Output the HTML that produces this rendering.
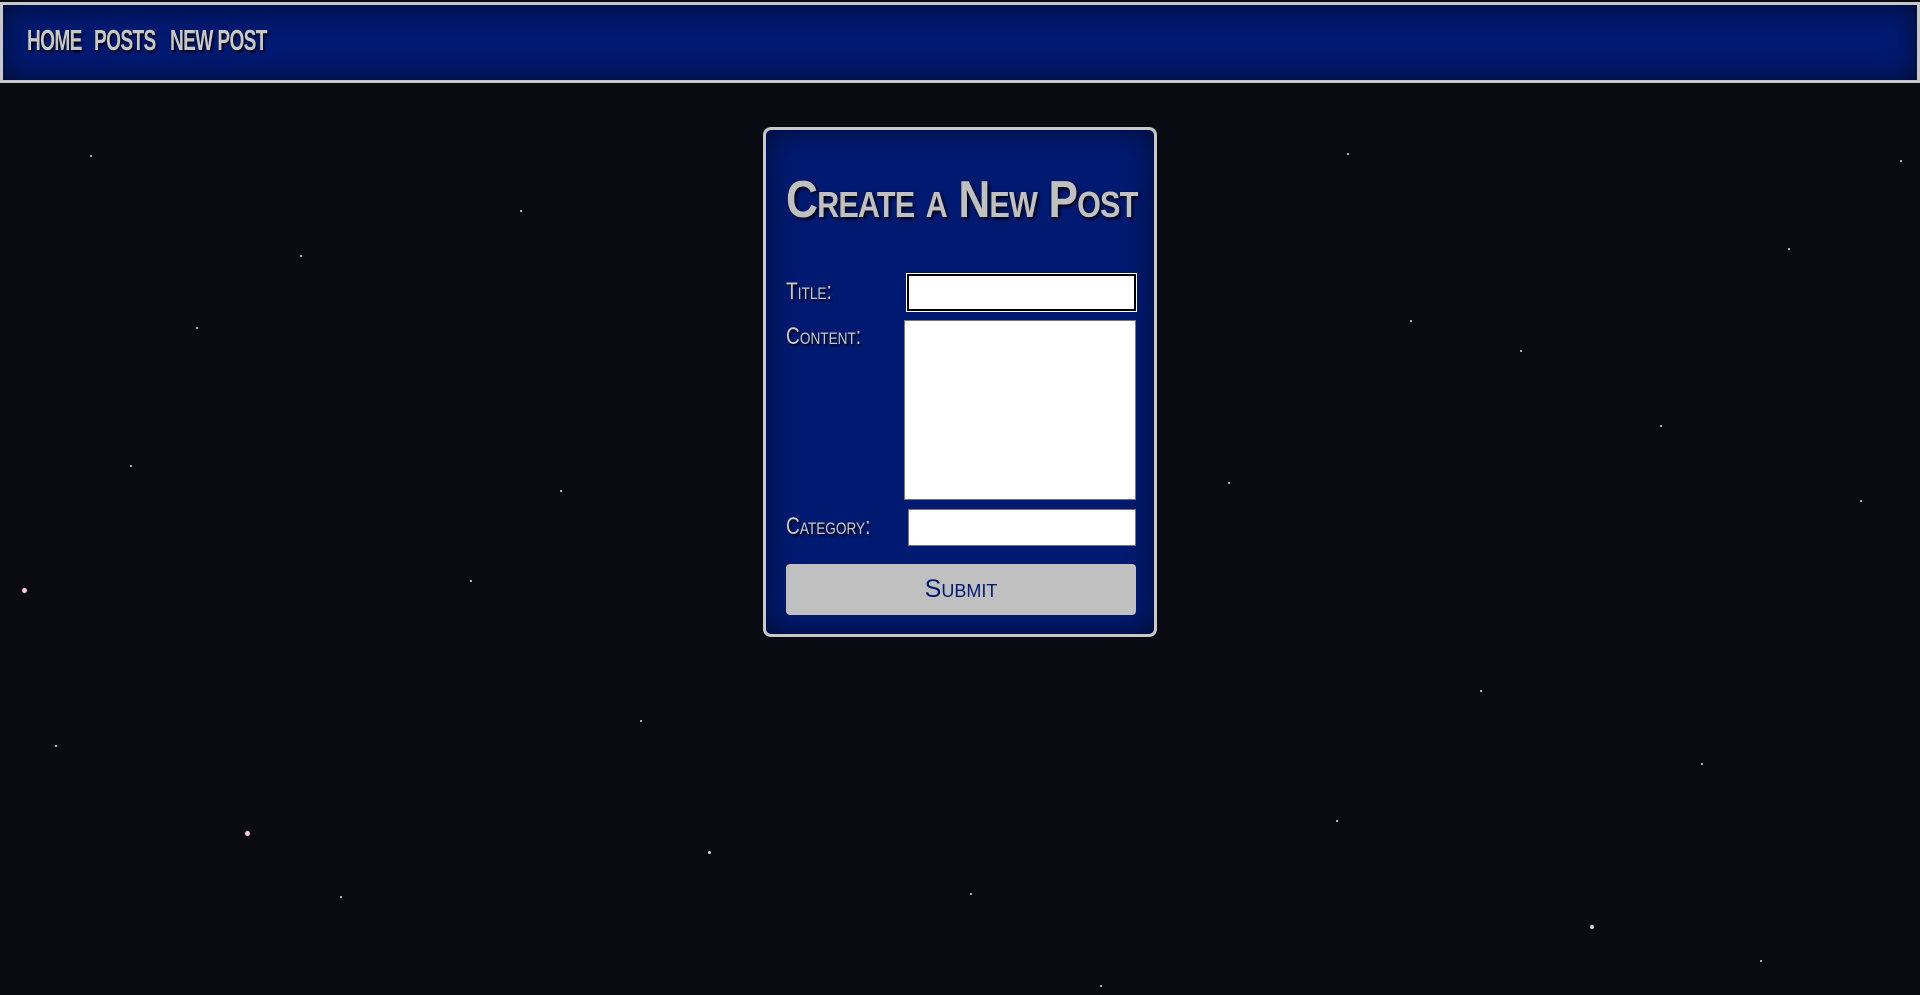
<!DOCTYPE html>
<html><head><meta charset="utf-8"><style>
html,body{margin:0;padding:0;width:1920px;height:995px;overflow:hidden;background:#0a0a12;font-family:"Liberation Sans Narrow","Liberation Sans",sans-serif;}
.stars{position:absolute;inset:0;}
.s{position:absolute;background:#ddd;border-radius:50%;width:2px;height:2px;}
nav{position:absolute;left:0;top:2px;width:1914px;height:75px;border:3px solid #c8c8c8;background:#001a72;box-shadow:inset 0 0 30px rgba(0,0,0,.6);}
nav a{position:absolute;top:20px;font-size:29px;font-weight:bold;color:#c8c8c8;text-shadow:2px 2px 3px #000;letter-spacing:-1px;text-decoration:none;transform:scaleX(.66);transform-origin:left;white-space:nowrap;}
.box{position:absolute;left:763px;top:127px;width:388px;height:504px;border:3px solid #c8c8c8;border-radius:8px;background:#001a72;box-shadow:inset 0 0 30px rgba(0,0,0,.6);}
h1{position:absolute;left:20px;top:40px;margin:0;font-size:52px;font-variant:small-caps;font-weight:bold;color:#c0c0c0;text-shadow:2px 2px 4px #000;white-space:nowrap;letter-spacing:-1px;transform:scaleX(.85);transform-origin:left;}
.lbl{position:absolute;left:20px;font-size:24px;font-variant:small-caps;color:#c8c8c8;text-shadow:2px 2px 3px #000;transform:scaleX(.8);transform-origin:left;white-space:nowrap;}
.in{position:absolute;background:#fff;border:1px solid #777;box-sizing:border-box;}
.btn{position:absolute;left:20px;top:434px;width:350px;height:51px;background:#c0c0c0;border-radius:4px;color:#001a72;font-size:25px;font-variant:small-caps;text-align:center;line-height:51px;}
</style></head><body>
<div class="stars">
<div class="s" style="left:90px;top:155px"></div><div class="s" style="left:196px;top:327px"></div><div class="s" style="left:22px;top:588px;width:5px;height:5px;background:#fce"></div><div class="s" style="left:245px;top:831px;width:5px;height:5px;background:#fce"></div><div class="s" style="left:1347px;top:153px"></div><div class="s" style="left:1228px;top:482px"></div><div class="s" style="left:1590px;top:925px;width:4px;height:4px"></div><div class="s" style="left:708px;top:851px;width:3px;height:3px"></div><div class="s" style="left:1701px;top:763px"></div><div class="s" style="left:1788px;top:248px"></div><div class="s" style="left:560px;top:490px"></div><div class="s" style="left:470px;top:580px"></div><div class="s" style="left:1410px;top:320px"></div><div class="s" style="left:1860px;top:500px"></div><div class="s" style="left:340px;top:896px"></div><div class="s" style="left:970px;top:893px"></div><div class="s" style="left:1336px;top:820px"></div><div class="s" style="left:1520px;top:350px"></div><div class="s" style="left:130px;top:465px"></div><div class="s" style="left:300px;top:255px"></div><div class="s" style="left:1660px;top:425px"></div><div class="s" style="left:1100px;top:985px"></div><div class="s" style="left:520px;top:210px"></div><div class="s" style="left:1480px;top:690px"></div><div class="s" style="left:640px;top:720px"></div><div class="s" style="left:1760px;top:960px"></div><div class="s" style="left:55px;top:745px"></div><div class="s" style="left:1900px;top:160px"></div>
</div>
<nav><a style="left:24px">HOME</a><a style="left:91px">POSTS</a><a style="left:167px">NEW POST</a></nav>
<div class="box">
<h1>Create a New Post</h1>
<div class="lbl" style="top:148px">Title:</div>
<div class="in" style="left:141px;top:144px;width:229px;height:37px;border:2px solid #000;outline:1px solid #fff"></div>
<div class="lbl" style="top:193px">Content:</div>
<div class="in" style="left:138px;top:190px;width:232px;height:180px"></div>
<div class="lbl" style="top:383px">Category:</div>
<div class="in" style="left:142px;top:379px;width:228px;height:37px"></div>
<div class="btn">Submit</div>
</div>
</body></html>
